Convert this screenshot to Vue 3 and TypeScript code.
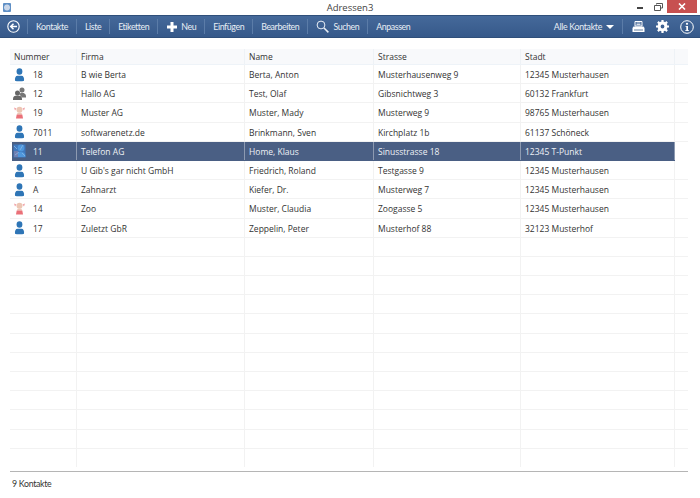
<script setup lang="ts">
interface Contact {
  icon: "blue" | "group" | "pink" | "selected";
  nummer: string;
  firma: string;
  name: string;
  strasse: string;
  stadt: string;
}

const contacts: Contact[] = [
  { icon: "blue", nummer: "18", firma: "B wie Berta", name: "Berta, Anton", strasse: "Musterhausenweg 9", stadt: "12345 Musterhausen" },
  { icon: "group", nummer: "12", firma: "Hallo AG", name: "Test, Olaf", strasse: "Gibsnichtweg 3", stadt: "60132 Frankfurt" },
  { icon: "pink", nummer: "19", firma: "Muster AG", name: "Muster, Mady", strasse: "Musterweg 9", stadt: "98765 Musterhausen" },
  { icon: "blue", nummer: "7011", firma: "softwarenetz.de", name: "Brinkmann, Sven", strasse: "Kirchplatz 1b", stadt: "61137 Schöneck" },
  { icon: "selected", nummer: "11", firma: "Telefon AG", name: "Home, Klaus", strasse: "Sinusstrasse 18", stadt: "12345 T-Punkt" },
  { icon: "blue", nummer: "15", firma: "U Gib's gar nicht GmbH", name: "Friedrich, Roland", strasse: "Testgasse 9", stadt: "12345 Musterhausen" },
  { icon: "blue", nummer: "A", firma: "Zahnarzt", name: "Kiefer, Dr.", strasse: "Musterweg 7", stadt: "12345 Musterhausen" },
  { icon: "pink", nummer: "14", firma: "Zoo", name: "Muster, Claudia", strasse: "Zoogasse 5", stadt: "12345 Musterhausen" },
  { icon: "blue", nummer: "17", firma: "Zuletzt GbR", name: "Zeppelin, Peter", strasse: "Musterhof 88", stadt: "32123 Musterhof" },
];

const emptyRows = Array.from({ length: 12 }, (_, i) => i);
</script>

<template>
  <div class="window">
    <header class="titlebar">
      <div class="title-left"><span class="app-icon"></span></div>
      <span class="title">Adressen3</span>
      <div class="window-controls">
        <span class="minimize"></span>
        <svg class="restore" width="9" height="8" viewBox="0 0 9 8">
          <path d="M2.500 1.500V.5h6v4.500H7M.5 2.500h6v5h-6z" fill="none" stroke="#555" />
        </svg>
        <span class="close">
          <svg width="8" height="7" viewBox="0 0 8 7">
            <path d="M1 .5l6 6M7 .5l-6 6" stroke="#fff" stroke-width="1.600" />
          </svg>
        </span>
      </div>
    </header>

    <nav class="toolbar">
      <button class="tool back">
        <svg width="13" height="13" viewBox="0 0 13 13">
          <circle cx="6.500" cy="6.500" r="5.700" fill="none" stroke="#fff" stroke-width="1.100" />
          <path d="M10 6.500H4M6.500 3.700L3.700 6.500l2.800 2.800" fill="none" stroke="#fff" stroke-width="1.500" />
        </svg>
      </button>
      <button class="tool">Kontakte</button>
      <button class="tool">Liste</button>
      <button class="tool">Etiketten</button>
      <button class="tool with-icon">
        <svg width="10" height="10" viewBox="0 0 10 10">
          <path d="M3.500 0h3v3.500H10v3H6.500V10h-3V6.500H0v-3h3.500z" fill="#fff" />
        </svg>
        Neu
      </button>
      <button class="tool">Einfügen</button>
      <button class="tool">Bearbeiten</button>
      <button class="tool with-icon search">
        <svg width="13" height="13" viewBox="0 0 13 13">
          <circle cx="5" cy="5" r="3.900" fill="none" stroke="#e8eef5" stroke-width="1" />
          <path d="M8 8l4.400 4.400" stroke="#e8eef5" stroke-width="1.500" />
        </svg>
        Suchen
      </button>
      <button class="tool last">Anpassen</button>

      <button class="filter">
        Alle Kontakte
        <span class="caret"></span>
      </button>
      <div class="actions">
        <svg width="13" height="12" viewBox="0 0 13 12">
          <path d="M3 .5h7v4.500H3z" fill="none" stroke="#fff" />
          <path d="M4.500 2h4M4.500 3.500h4" stroke="#fff" stroke-width=".8" />
          <path d="M1.500 5.500h10l1 1.500v4H.5V7z" fill="#fff" />
          <path d="M2 9h9" stroke="#3c5f8c" stroke-width=".8" />
        </svg>
        <svg width="13" height="13" viewBox="0 0 13 13">
          <circle cx="6.500" cy="6.500" r="3.400" fill="none" stroke="#fff" stroke-width="3" />
          <path d="M6.500 0v3M6.500 10v3M0 6.500h3M10 6.500h3M1.900 1.900L4 4M9 9l2.100 2.100M11.100 1.900L9 4M4 9l-2.100 2.100" stroke="#fff" stroke-width="2.200" />
        </svg>
        <svg width="14" height="14" viewBox="0 0 14 14">
          <circle cx="7" cy="7" r="6.300" fill="none" stroke="#fff" stroke-width="1" />
          <circle cx="7" cy="3.800" r="1.100" fill="#fff" />
          <path d="M5.500 5.900H8v4.300h1v.9H5.200v-.9h1.100V6.800h-.8z" fill="#fff" />
        </svg>
      </div>
    </nav>

    <main class="content">
      <div class="row head">
        <div class="cell">Nummer</div>
        <div class="cell">Firma</div>
        <div class="cell">Name</div>
        <div class="cell">Strasse</div>
        <div class="cell">Stadt</div>
        <div class="cell filler"></div>
      </div>

      <div
        v-for="c in contacts"
        :key="c.nummer"
        class="row"
        :class="{ selected: c.icon === 'selected' }"
      >
        <div class="cell nummer">
          <svg class="person" width="13" height="14" viewBox="0 0 13 14">
            <template v-if="c.icon === 'blue'">
              <ellipse cx="6.500" cy="3.500" rx="2.900" ry="3.300" fill="#2e75b6" />
              <path d="M2 12.800c-.4-3 .6-5 2.500-5h4c1.900 0 2.900 2 2.500 5-1.500.7-7.500.7-9 0z" fill="#2e75b6" />
            </template>
            <template v-else-if="c.icon === 'group'">
              <circle cx="9" cy="3" r="2.500" fill="#777" />
              <path d="M6.500 7.500c.5-1.500 1.300-1.800 2.500-1.800s4 .5 4 3.800v1H9z" fill="#777" />
              <circle cx="4.500" cy="6" r="2.500" fill="#666" />
              <path d="M0 13v-1c0-2.600 1.500-3.400 4.500-3.400S9 9.400 9 12v1z" fill="#666" />
            </template>
            <template v-else-if="c.icon === 'pink'">
              <path d="M1 1.500l2.500 1-1.500 2zM12 1.500l-2.500 1 1.500 2z" fill="#f0a0a5" />
              <circle cx="6.500" cy="3.800" r="3" fill="#ecc6b4" />
              <path d="M4.500 6.800h4L9 8.500H4z" fill="#ecc6b4" />
              <path d="M3.700 8.500h5.600l.7 4H3z" fill="#ea7078" />
            </template>
            <template v-else>
              <rect x=".5" y=".5" width="12" height="13" fill="#3f78bd" />
              <circle cx="8" cy="4" r="3.400" fill="#4f97dc" />
              <path d="M3 13c0-3 2-5 5-5s4.500 1.500 4.500 5z" fill="#4f97dc" />
              <path d="M1 7h4v6H1z" fill="#6f7fb0" />
              <path d="M1 2l3 3M9 9l3 3M10 1L7 6M2 11l4-3" stroke="#8fbdea" stroke-width=".7" />
            </template>
          </svg>
          <span>{{ c.nummer }}</span>
        </div>
        <div class="cell">{{ c.firma }}</div>
        <div class="cell">{{ c.name }}</div>
        <div class="cell">{{ c.strasse }}</div>
        <div class="cell">{{ c.stadt }}</div>
        <div class="cell filler"></div>
      </div>

      <div v-for="i in emptyRows" :key="i" class="row">
        <div class="cell"></div>
        <div class="cell"></div>
        <div class="cell"></div>
        <div class="cell"></div>
        <div class="cell"></div>
        <div class="cell filler"></div>
      </div>
    </main>

    <footer class="status">9 Kontakte</footer>
  </div>
</template>

<style scoped>
.window {
  width: 700px;
  height: 498px;
  display: flex;
  flex-direction: column;
  background: #fff;
  color: #333;
  font-family: "Open Sans", "Noto Sans", sans-serif;
  font-size: 8.500px;
  overflow: hidden;
}

.titlebar {
  height: 15px;
  display: grid;
  grid-template-columns: 1fr auto 1fr;
  align-items: center;
  flex: none;
}

.title-left {
  display: flex;
}

.app-icon {
  width: 8px;
  height: 9px;
  margin-left: 3px;
  border-radius: 1px;
  background: radial-gradient(circle at 50% 50%, #c9d6e8 0 2.500px, #5f8fc5 3.500px);
}

.title {
  font-size: 9.500px;
  color: #444;
}

.window-controls {
  display: flex;
  align-items: center;
  justify-content: flex-end;
  height: 13px;
  margin-top: -2px;
}

.minimize {
  width: 6px;
  height: 2px;
  background: #444;
  margin-top: 3px;
  margin-right: 11px;
}

.restore {
  margin-right: 4px;
}

.close {
  width: 30px;
  height: 13px;
  margin-right: 3px;
  background: #c75050;
  display: flex;
  align-items: center;
  justify-content: center;
}

.toolbar {
  height: 23px;
  flex: none;
  display: flex;
  align-items: center;
  background: linear-gradient(#45699a, #36598a);
  border-top: 1px solid #2f4f7a;
  border-bottom: 1px solid #2f4f7a;
  box-sizing: border-box;
  font-family: Lato, "Open Sans", sans-serif;
}

.tool {
  height: 15px;
  padding: 0 8px;
  display: flex;
  align-items: center;
  gap: 4px;
  background: none;
  border: none;
  border-right: 1px solid #5b7ca8;
  color: #e8eef5;
  font: inherit;
  font-size: 8.800px;
  letter-spacing: -0.4px;
  white-space: nowrap;
}

.tool.back {
  width: 28px;
  padding: 0 0 0 7px;
  box-sizing: border-box;
}

.tool.with-icon {
  padding: 0 8px 0 9px;
}

.tool.search {
  padding-left: 8px;
}

.tool.last {
  border-right: none;
}

.filter {
  margin-left: auto;
  display: flex;
  align-items: center;
  gap: 4px;
  height: 15px;
  padding: 0 8px 0 0;
  background: none;
  border: none;
  border-right: 1px solid #5b7ca8;
  color: #e8eef5;
  font: inherit;
  font-size: 8.800px;
  letter-spacing: -0.3px;
}

.caret {
  width: 0;
  height: 0;
  border-left: 4px solid transparent;
  border-right: 4px solid transparent;
  border-top: 4px solid #fff;
}

.actions {
  display: flex;
  align-items: center;
  gap: 11px;
  padding: 0 6px 0 9px;
}

.content {
  margin: 11px 12px 0 10px;
  flex: none;
}

.row {
  display: grid;
  grid-template-columns: 67px 168px 129px 147px 154px 13px;
  height: 19.200px;
  border-bottom: 1px solid #f2f2f2;
  box-sizing: border-box;
}

.row:last-child {
  height: 18px;
  border-bottom: none;
}

.row.head {
  height: 16px;
  background: #f8f9fb;
  border-bottom: 1px solid #eef3f8;
  color: #333;
}

.cell {
  display: flex;
  align-items: center;
  padding: 1px 0 0 4px;
  border-right: 1px solid #f2f2f2;
  white-space: nowrap;
  overflow: hidden;
}

.row.head .cell {
  padding-top: 0;
  border-right-color: #eef2f6;
}

.cell.filler {
  border-right: none;
  padding: 0;
}

.cell.nummer {
  padding-left: 3px;
  gap: 7px;
}

.person {
  flex: none;
}

.row.selected {
  margin-left: 2px;
  grid-template-columns: 65px 168px 129px 147px 154px;
  width: 663px;
  background: #4a5f84;
  color: #eef1f6;
  border-bottom-color: #4a5f84;
}

.row.selected .cell {
  border-right-color: #8d9ab1;
}

.row.selected .cell.nummer {
  padding-left: 1px;
}

.row.selected .cell.filler {
  display: none;
}

.status {
  margin: 4px 12px 0 10px;
  border-top: 1px solid #b5b5b5;
  padding: 6px 0 0 2px;
  font-family: Lato, "Open Sans", sans-serif;
  font-size: 8.800px;
  letter-spacing: -0.3px;
  color: #333;
}
</style>

<style>
html,
body {
  margin: 0;
  background: #fff;
}
</style>
